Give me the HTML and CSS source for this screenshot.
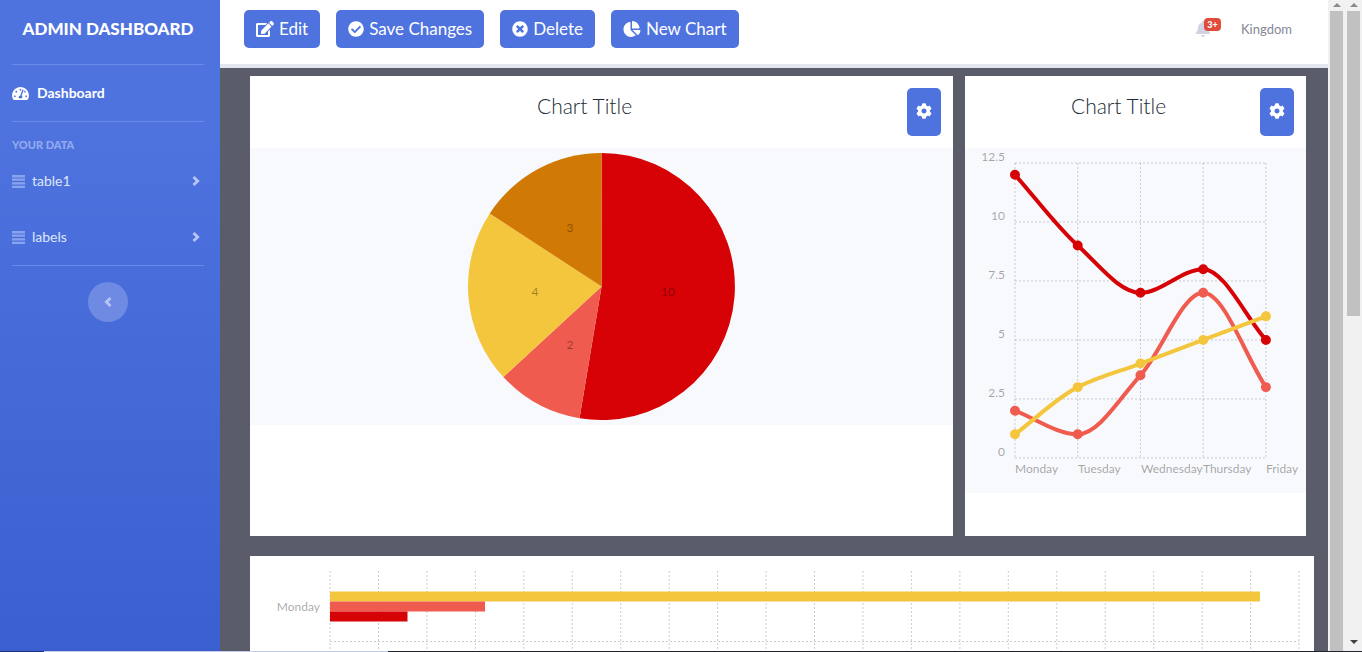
FILE: index.html
```html
<!DOCTYPE html>
<html lang="en">
<head>
<meta charset="utf-8">
<title>Admin Dashboard</title>
<link rel="stylesheet" href="styles.css">
</head>
<body>
<svg class="sprite" aria-hidden="true">
  <symbol id="cog" viewBox="0 0 512 512"><path d="M487.4 315.7l-42.6-24.6c4.3-23.2 4.3-47 0-70.2l42.6-24.6c4.9-2.8 7.1-8.6 5.5-14-11.1-35.6-30-67.8-54.7-94.6-3.8-4.1-10-5.1-14.8-2.3L380.8 110c-17.9-15.4-38.5-27.3-60.8-35.1V25.8c0-5.6-3.9-10.5-9.4-11.7-36.7-8.2-74.3-7.8-109.2 0-5.5 1.2-9.4 6.1-9.4 11.7V75c-22.2 7.9-42.8 19.8-60.8 35.1L88.7 85.5c-4.9-2.8-11-1.9-14.8 2.3-24.7 26.7-43.6 58.9-54.7 94.6-1.7 5.4.6 11.2 5.5 14L67.3 221c-4.3 23.2-4.3 47 0 70.2l-42.6 24.6c-4.9 2.8-7.1 8.6-5.5 14 11.1 35.6 30 67.8 54.7 94.6 3.8 4.1 10 5.1 14.8 2.3l42.6-24.6c17.9 15.4 38.5 27.3 60.8 35.1v49.2c0 5.6 3.9 10.5 9.4 11.7 36.7 8.2 74.3 7.8 109.2 0 5.5-1.2 9.4-6.1 9.4-11.7v-49.2c22.2-7.9 42.8-19.8 60.8-35.1l42.6 24.6c4.9 2.8 11 1.9 14.8-2.3 24.7-26.7 43.6-58.9 54.7-94.6 1.5-5.5-.7-11.3-5.6-14.1zM256 336c-44.1 0-80-35.9-80-80s35.9-80 80-80 80 35.9 80 80-35.9 80-80 80z"/></symbol>
  <symbol id="list" viewBox="0 0 13 13"><path d="M0 0h13v2.4H0zM0 3.6h13v2.2H0zM0 7.2h13v2.2H0zM0 10.7h13v2.3H0z"/></symbol>
  <symbol id="chevron" viewBox="0 0 8 12"><path d="M1.5 2l4.2 4-4.2 4" fill="none" stroke="currentColor" stroke-width="2.8"/></symbol>
</svg>
<div class="app">
  <nav class="sidebar">
    <a class="brand" href="#">ADMIN DASHBOARD</a>
    <hr class="divider">
    <a class="nav-main" href="#"><svg class="icon-gauge" viewBox="0 0 576 512"><path d="M288 32C128.94 32 0 160.94 0 320c0 52.8 14.25 102.26 39.06 144.8 5.61 9.62 16.3 15.2 27.44 15.2h443c11.14 0 21.83-5.58 27.44-15.2C561.75 422.26 576 372.8 576 320c0-159.06-128.94-288-288-288zm0 64c14.71 0 26.58 10.13 30.32 23.65-1.11 2.26-2.64 4.23-3.45 6.67l-9.22 27.67c-5.13 3.49-10.97 6.01-17.64 6.01-17.67 0-32-14.33-32-32S270.33 96 288 96zM96 384c-17.67 0-32-14.33-32-32s14.33-32 32-32 32 14.33 32 32-14.33 32-32 32zm48-160c-17.67 0-32-14.33-32-32s14.33-32 32-32 32 14.33 32 32-14.33 32-32 32zm246.77-72.41l-61.33 184C343.13 347.33 352 364.54 352 384c0 11.72-3.38 22.55-8.88 32H232.88c-5.5-9.45-8.88-20.28-8.88-32 0-33.94 26.5-61.43 59.9-63.59l61.34-184.01c4.17-12.56 17.73-19.45 30.36-15.17 12.57 4.19 19.35 17.79 15.17 30.36zm14.66 57.2l15.52-46.55c3.47-1.29 7.13-2.23 11.05-2.23 17.67 0 32 14.33 32 32s-14.33 32-32 32c-11.38-.01-20.89-6.28-26.57-15.22zM480 384c-17.67 0-32-14.33-32-32s14.33-32 32-32 32 14.33 32 32-14.33 32-32 32z"/></svg>Dashboard</a>
    <hr class="divider">
    <h2 class="nav-heading">YOUR DATA</h2>
    <a class="nav-item" href="#"><svg class="icon-list"><use href="#list"/></svg><span>table1</span><svg class="icon-chevron"><use href="#chevron"/></svg></a>
    <a class="nav-item" href="#"><svg class="icon-list"><use href="#list"/></svg><span>labels</span><svg class="icon-chevron"><use href="#chevron"/></svg></a>
    <hr class="divider">
    <button class="toggle" type="button" aria-label="Collapse sidebar"><svg class="icon-chevron flip"><use href="#chevron"/></svg></button>
  </nav>
  <div class="content">
    <header class="topbar">
      <button class="btn" type="button"><svg class="icon-wide" viewBox="0 0 576 512"><path d="M402.6 83.2l90.2 90.2c3.8 3.8 3.8 10 0 13.8L274.4 405.6l-92.8 10.3c-12.4 1.4-22.9-9.1-21.5-21.5l10.3-92.8L388.8 83.2c3.8-3.8 10-3.8 13.8 0zm162-22.9l-48.8-48.8c-15.2-15.2-39.9-15.2-55.2 0l-35.4 35.4c-3.8 3.8-3.8 10 0 13.8l90.2 90.2c3.8 3.8 10 3.8 13.8 0l35.4-35.4c15.2-15.3 15.2-40 0-55.2zM384 346.2V448H64V128h229.8c3.2 0 6.2-1.3 8.5-3.5l40-40c7.6-7.6 2.2-20.5-8.5-20.5H48C21.5 64 0 85.5 0 112v352c0 26.5 21.5 48 48 48h352c26.5 0 48-21.5 48-48V306.2c0-10.7-12.9-16-20.5-8.5l-40 40c-2.2 2.3-3.5 5.3-3.5 8.5z"/></svg>Edit</button>
      <button class="btn" type="button"><svg class="icon" viewBox="0 0 512 512"><path d="M504 256c0 136.967-111.033 248-248 248S8 392.967 8 256 119.033 8 256 8s248 111.033 248 248zM227.314 387.314l184-184c6.248-6.248 6.248-16.379 0-22.627l-22.627-22.627c-6.248-6.249-16.379-6.249-22.628 0L216 308.118l-70.059-70.059c-6.248-6.248-16.379-6.248-22.628 0l-22.627 22.627c-6.248 6.248-6.248 16.379 0 22.627l104 104c6.249 6.249 16.379 6.249 22.628.001z"/></svg>Save Changes</button>
      <button class="btn" type="button"><svg class="icon" viewBox="0 0 512 512"><path d="M256 8C119 8 8 119 8 256s111 248 248 248 248-111 248-248S393 8 256 8zm121.6 313.1c4.7 4.7 4.7 12.3 0 17L338 377.6c-4.7 4.7-12.3 4.7-17 0L256 312l-65.1 65.6c-4.7 4.7-12.3 4.7-17 0L134.4 338c-4.7-4.7-4.7-12.3 0-17l65.6-65-65.6-65.1c-4.7-4.7-4.7-12.3 0-17l39.6-39.6c4.7-4.7 12.3-4.7 17 0l65 65.7 65.1-65.6c4.7-4.7 12.3-4.7 17 0l39.6 39.6c4.7 4.7 4.7 12.3 0 17L312 256l65.6 65.1z"/></svg>Delete</button>
      <button class="btn" type="button"><svg class="icon-wide" viewBox="0 0 544 512"><path d="M527.79 288H290.5l158.03 158.03c6.04 6.04 15.98 6.53 22.19.68 38.7-36.46 65.32-85.61 73.13-140.86 1.34-9.46-6.51-17.85-16.06-17.85zm-15.83-64.8C503.72 103.74 408.26 8.28 288.8.04 279.68-.59 272 7.1 272 16.24V240h223.77c9.14 0 16.82-7.68 16.19-16.8zM224 288V50.71c0-9.55-8.39-17.4-17.84-16.06C86.99 51.49-4.1 155.6.14 280.37 4.5 408.51 114.83 513.59 243.03 511.98c50.4-.63 96.97-16.87 135.26-44.03 7.9-5.6 8.42-17.23 1.57-24.08L224 288z"/></svg>New Chart</button>
      <div class="account">
        <a class="alerts" href="#" aria-label="Alerts"><svg class="icon-bell" viewBox="0 0 448 512"><path d="M224 512c35.32 0 63.97-28.65 63.97-64H160.03c0 35.35 28.65 64 63.97 64zm215.39-149.71c-19.32-20.76-55.47-51.99-55.47-154.29 0-77.7-54.48-139.9-127.94-155.16V32c0-17.67-14.32-32-31.98-32s-31.98 14.33-31.98 32v20.84C118.56 68.1 64.08 130.3 64.08 208c0 102.3-36.15 133.53-55.47 154.29-6 6.45-8.66 14.16-8.61 21.71.11 16.4 12.98 32 32.1 32h383.8c19.12 0 32-15.6 32.1-32 .05-7.55-2.61-15.27-8.61-21.71z"/></svg><span class="badge">3+</span></a>
        <a class="user" href="#">Kingdom</a>
      </div>
    </header>
    <main class="board">
      <div class="chart-row">
        <section class="card">
          <div class="card-head"><h1 class="title">Chart Title</h1><button class="gear" type="button" aria-label="Chart settings"><svg class="icon"><use href="#cog"/></svg></button></div>
          <svg class="chart chart-pie" viewBox="0 0 703 277">
            <path class="a" d="M351.5 138.5V5A133.5 133.5 0 1 1 329.5 270.2z"/>
            <path class="b" d="M351.5 138.5L329.5 270.2A133.5 133.5 0 0 1 253.3 228.9z"/>
            <path class="c" d="M351.5 138.5L253.3 228.9A133.5 133.5 0 0 1 239.7 65.5z"/>
            <path class="d" d="M351.5 138.5L239.7 65.5A133.5 133.5 0 0 1 351.5 5z"/>
            <g class="label mid"><text x="418" y="148">10</text><text x="320" y="201">2</text><text x="285" y="148">4</text><text x="320" y="84">3</text></g>
          </svg>
        </section>
        <section class="card">
          <div class="card-head"><h1 class="title">Chart Title</h1><button class="gear" type="button" aria-label="Chart settings"><svg class="icon"><use href="#cog"/></svg></button></div>
          <svg class="chart chart-line" viewBox="0 0 341 345">
            <path class="grid" d="M50 15V310M112.75 15V310M175.5 15V310M238.25 15V310M301 15V310M50 15H301M50 74H301M50 133H301M50 192H301M50 251H301M50 310H301"/>
            <g class="label end"><text x="40" y="13">12.5</text><text x="40" y="72">10</text><text x="40" y="131">7.5</text><text x="40" y="190">5</text><text x="40" y="249">2.5</text><text x="40" y="308">0</text></g>
            <g class="label"><text x="50" y="325">Monday</text><text x="113" y="325">Tuesday</text><text x="176" y="325">Wednesday</text><text x="238" y="325">Thursday</text><text x="301" y="325">Friday</text></g>
            <g class="series sa"><path d="M50 26.8C70.9 50.4 91.8 78.7 112.75 97.6C133.7 116.5 154.6 144.8 175.5 144.8C196.4 144.8 217.3 121.2 238.25 121.2C259.2 121.2 280.1 168.4 301 192"/><path class="dot" d="M50 26.8h0M112.75 97.6h0M175.5 144.8h0M238.25 121.2h0M301 192h0"/></g>
            <g class="series sb"><path d="M50 262.8C70.9 270.7 91.8 286.4 112.75 286.4C133.7 286.4 154.6 250.3 175.5 227.4C196.4 204.5 217.3 144.8 238.25 144.8C259.2 144.8 280.1 207.7 301 239.2"/><path class="dot" d="M50 262.8h0M112.75 286.4h0M175.5 227.4h0M238.25 144.8h0M301 239.2h0"/></g>
            <g class="series sc"><path d="M50 286.4C70.9 270.7 91.8 249.7 112.75 239.2C133.7 228.7 154.6 223.5 175.5 215.6L238.25 192L301 168.4"/><path class="dot" d="M50 286.4h0M112.75 239.2h0M175.5 215.6h0M238.25 192h0M301 168.4h0"/></g>
          </svg>
        </section>
      </div>
      <section class="card card-bars">
        <svg class="chart-bars" viewBox="0 0 1064 156">
          <path class="grid" d="M80 15V156M128.5 15V156M176.9 15V156M225.4 15V156M273.8 15V156M322.3 15V156M370.7 15V156M419.2 15V156M467.6 15V156M516.1 15V156M564.5 15V156M613 15V156M661.4 15V156M709.9 15V156M758.3 15V156M806.8 15V156M855.2 15V156M903.7 15V156M952.1 15V156M1000.6 15V156M1049 15V156M80 85.5H1049"/>
          <g class="label end"><text x="70" y="55">Monday</text></g>
          <rect class="c" x="80" y="35.5" width="930" height="10"/>
          <rect class="b" x="80" y="45.5" width="155" height="10"/>
          <rect class="a" x="80" y="55.5" width="77.5" height="10"/>
        </svg>
      </section>
    </main>
  </div>
  <div class="scrollbars" aria-hidden="true">
    <div class="track"><i class="arrow up"></i><i class="thumb full"></i></div>
    <div class="track"><i class="arrow up"></i><i class="thumb half"></i><i class="arrow down"></i></div>
  </div>
</div>
<footer class="edge"><i class="edge-start"></i><i class="edge-light"></i></footer>
</body>
</html>
```
FILE: styles.css
```css
* { box-sizing: border-box; }
body {
  margin: 0;
  height: 100vh;
  overflow: hidden;
  display: flex;
  flex-direction: column;
  font-family: Lato, "Open Sans", sans-serif;
  font-size: 16px;
  line-height: 24px;
}
a { color: inherit; text-decoration: none; }
button { font: inherit; border: 0; cursor: pointer; }
svg { display: block; fill: currentColor; }
.sprite { display: none; }
.app { flex: 1; min-height: 0; display: flex; }

.sidebar {
  flex: 0 0 220px;
  padding: 0 16px 0 12px;
  display: flex;
  flex-direction: column;
  color: #fff;
  background: linear-gradient(180deg, #4e73df 128px, #3a60d0 651px);
}
.brand { height: 64px; padding-bottom: 6px; display: flex; align-items: center; justify-content: center; font-size: 17px; font-weight: 900; white-space: nowrap; }
.divider { width: 100%; margin: 0; border: 0; border-top: 1px solid #698aea; }
.nav-main { height: 56px; display: flex; align-items: center; gap: 8px; font-size: 14px; font-weight: 700; }
.icon-gauge { width: 17px; height: 15px; }
.nav-heading { margin: 15px 0 0; font-size: 11px; line-height: 16px; font-weight: 900; color: #93aaee; }
.nav-item { height: 56px; padding-right: 4px; display: flex; align-items: center; gap: 7px; font-size: 14px; color: #dfe6fb; }
.nav-item span { flex: 1; }
.icon-list { width: 13px; height: 13px; color: #89a3ed; }
.icon-chevron { width: 8px; height: 12px; color: #b7c7f5; }
.toggle { width: 40px; height: 40px; margin: 16px auto 0; padding: 0; display: grid; place-items: center; border-radius: 50%; background: #6e8ae2; }
.flip { transform: scaleX(-1); }

.content { flex: 1; min-width: 0; display: flex; flex-direction: column; background: #5a5c69; }
.topbar { flex: none; height: 68px; padding: 0 36px 6px 24px; display: flex; align-items: center; gap: 16px; background: #fff; border-bottom: 4px solid #e3e6ee; }
.btn { height: 38px; padding: 0 12px; display: flex; align-items: center; gap: 5px; border-radius: 5px; background: #4e73df; color: #fff; font-size: 17px; white-space: nowrap; }
.icon { width: 16px; height: 16px; }
.icon-wide { width: 18px; height: 16px; }
.account { margin-left: auto; display: flex; align-items: center; gap: 20px; font-size: 13px; color: #858796; }
.alerts { position: relative; width: 25px; display: flex; }
.icon-bell { width: 14px; height: 16px; color: #d1d3e2; }
.badge { position: absolute; right: 0; top: -3px; width: 17px; height: 13px; border-radius: 4px; background: #e04b3c; color: #fff; font-size: 9px; line-height: 13px; font-weight: 900; text-align: center; }

.board { flex: 1; min-height: 0; overflow: hidden; padding: 8px 14px 0 30px; }
.chart-row { display: grid; grid-template-columns: 33fr 16fr; gap: 12px; margin-right: 8px; }
.card { background: #fff; padding-bottom: 43px; }
.card-head { height: 72px; padding: 12px; display: grid; grid-template-columns: 1fr 34px; }
.title { margin: 0; padding-top: 6px; text-align: center; font-size: 21px; line-height: 24px; font-weight: 300; color: #212a35; }
.gear { height: 48px; padding: 0 0 2px; display: grid; place-items: center; border-radius: 5px; background: #4e73df; color: #fff; }
.chart { width: 100%; background: #f8f9fc; }
.card-bars { margin-top: 20px; padding: 0; }
.chart-bars { width: 100%; }
.grid { fill: none; stroke: #000; stroke-opacity: .2; stroke-dasharray: 2; }
.label { fill: #000; fill-opacity: .36; font-size: 12px; }
.mid { text-anchor: middle; }
.end { text-anchor: end; }
.series { fill: none; stroke-width: 4; }
.dot { stroke-width: 10; stroke-linecap: round; }
.sa { stroke: #d70206; }
.sb { stroke: #f05b4f; }
.sc { stroke: #f4c63d; }
.a { fill: #d70206; }
.b { fill: #f05b4f; }
.c { fill: #f4c63d; }
.d { fill: #d17905; }

.scrollbars { flex: none; display: flex; background: #f1f1f1; }
.track { width: 17px; padding: 3px 2px 0; display: flex; flex-direction: column; align-items: center; }
.arrow { border: 4px solid transparent; border-top: 0; }
.up { border-bottom: 4px solid #8a8a8a; margin-bottom: 4px; }
.down { border-bottom: 0; border-top: 4px solid #404040; margin: auto 0 7px; }
.thumb { width: 13px; background: #c1c1c1; }
.full { flex: 1; }
.half { height: 47%; }
.edge { height: 1px; display: flex; background: #22252c; }
.edge-start { width: 44px; background: #1b3478; }
.edge-light { width: 344px; background: #c3cbe4; }
```
